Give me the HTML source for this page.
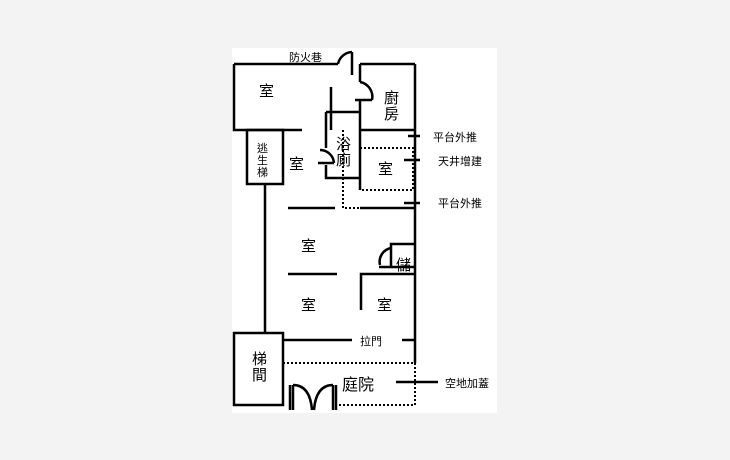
<!DOCTYPE html>
<html><head><meta charset="utf-8"><style>
html,body{margin:0;padding:0;background:#f3f3f3;width:730px;height:460px;overflow:hidden}
svg{position:absolute;left:0;top:0}
text{font-family:"Liberation Sans","Noto Sans CJK TC",sans-serif;fill:#000}
</style></head><body>
<svg width="730" height="460" viewBox="0 0 730 460">
<rect x="232" y="48" width="265" height="365" fill="#fff"/>
<g stroke="#000" stroke-width="2.5" fill="none">
<path d="M234 64H338M360 64H415M415 64V363M234 64V130H302"/>
<path d="M352 52V75"/>
<path d="M338 64A15 15 0 0 1 352 52"/>
<path d="M360 64V82M360 100V190M355 100H372"/>
<path d="M360 82A15 15 0 0 1 372 100"/>
<path d="M331 87V130M326 112H360M326 112V148M326 165V178H360M318 163H334"/>
<path d="M334 163A14 14 0 0 0 320 150"/>
<path d="M360 130H415M408 136H420"/>
<rect x="247" y="130" width="36" height="54"/>
<path d="M265 184V333"/>
<path d="M288 208H335M360 208H415M404 160H420M404 203H420"/>
<path d="M288 274H337M361 310V274H415M391 267V244H415M379 267H415"/>
<path d="M391 248A14 14 0 0 0 380 265"/>
<rect x="234" y="333" width="49" height="72"/>
<path d="M283 340H352M402 340H415"/>
<path d="M396 382H438"/>
<path d="M290 385V410M293 385V410M333 385V410M336 385V410"/>
<path d="M293 385Q310 385 312 410M333 385Q316 385 314 410"/>
</g>
<g stroke="#000" stroke-width="2" fill="none" stroke-dasharray="2 2">
<path d="M343 130V208H360M360 148H413V190H360"/>
<path d="M283 363H415V405H338"/>
</g>
<g font-size="15">
<text x="259" y="96">室</text>
<text x="289" y="169">室</text>
<text x="378" y="174">室</text>
<text x="301" y="251">室</text>
<text x="301" y="310">室</text>
<text x="377" y="310">室</text>
<text x="384" y="103">廚</text>
<text x="384" y="119">房</text>
<text x="336" y="149">浴</text>
<text x="336" y="165">廁</text>
<text x="396" y="270">儲</text>
<text x="252" y="364">梯</text>
<text x="252" y="380">間</text>
<text x="342" y="390" font-size="16">庭院</text>
</g>
<g font-size="11">
<text x="257" y="152">逃</text><text x="257" y="164">生</text><text x="257" y="176">梯</text>
<text x="289" y="61">防火巷</text>
<text x="433" y="141">平台外推</text>
<text x="438" y="165">天井增建</text>
<text x="438" y="207">平台外推</text>
<text x="360" y="345">拉門</text>
<text x="445" y="387">空地加蓋</text>
</g>
</svg>
</body></html>
